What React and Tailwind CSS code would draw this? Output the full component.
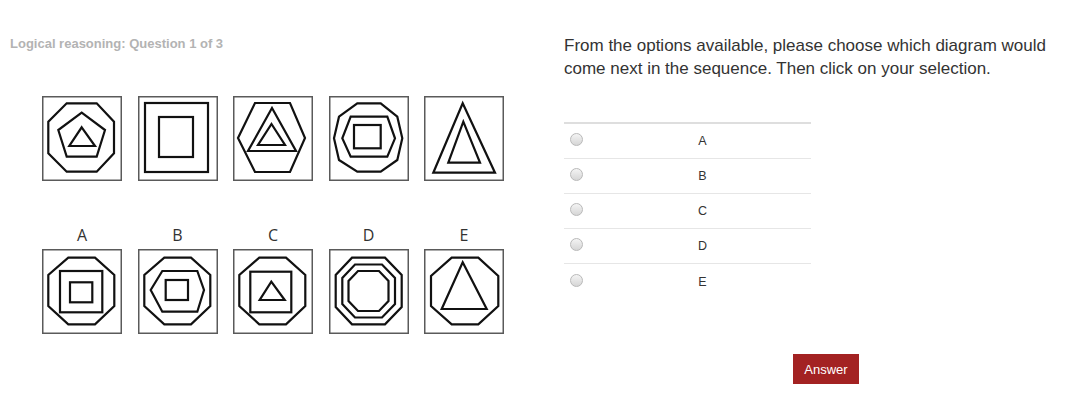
import React from "react";

// Shape frame: every diagram is an 80x85 box with a thin grey border
const Frame = ({ children }) => (
  <svg width="80" height="85" viewBox="0 0 80 85" className="block">
    <rect x="0.75" y="0.75" width="78.5" height="83.5" fill="#fff" stroke="#5a5a5a" strokeWidth="1.5" />
    <g fill="none" stroke="#111" strokeWidth="2.2" strokeLinejoin="miter">
      {children}
    </g>
  </svg>
);

const octA = "26.3,8.7 53,8.7 72.3,26 72.3,57 53,75.3 26.3,75.3 6.3,57 6.3,26";

const sequence = [
  <>
    <polygon points="24.7,7.3 54.7,7.3 72,25.7 72,57.3 54.7,75.7 24.7,75.7 6.3,57.3 6.3,25.7" />
    <polygon points="39.7,16.7 63,34 54.7,60.7 24.7,60.7 16.3,34" />
    <polygon points="39.7,31.3 53,50 27.3,50" />
  </>,
  <>
    <rect x="7" y="7" width="63" height="69" />
    <rect x="21" y="21" width="34" height="40" />
  </>,
  <>
    <polygon points="5,42 22,7 57,7 72,42 57,76 22,76" />
    <polygon points="39,12 63,55 15,55" />
    <polygon points="38.5,28 52,49 25,49" />
  </>,
  <>
    <polygon points="28.3,7.3 51.7,7.3 68.3,20.7 73.3,42.3 68.3,64 51.7,75.7 28.3,75.7 10,64 5,42.3 10,20.7" />
    <polygon points="21.7,20.7 58.3,20.7 66,42.3 58.3,60.7 21.7,60.7 13.3,42.3" />
    <rect x="25" y="29" width="26.7" height="23.3" />
  </>,
  <>
    <polygon points="38.7,7.3 71,76.7 9.3,76.7" />
    <polygon points="39.3,25.7 56,66.7 24.3,66.7" />
  </>,
];

const options = [
  {
    label: "A",
    shape: (
      <>
        <polygon points={octA} />
        <rect x="18" y="22" width="42.3" height="41.3" />
        <rect x="28" y="33.3" width="22.3" height="20" />
      </>
    ),
  },
  {
    label: "B",
    shape: (
      <>
        <polygon points={octA} />
        <polygon points="24.3,22 59.3,22 66,41 59.3,62.7 24.3,62.7 12.7,41" />
        <rect x="27.7" y="31" width="22.3" height="20" />
      </>
    ),
  },
  {
    label: "C",
    shape: (
      <>
        <polygon points={octA} />
        <rect x="17.3" y="22.7" width="41" height="40.6" />
        <polygon points="38.3,32.7 51.7,51 26.7,51" />
      </>
    ),
  },
  {
    label: "D",
    shape: (
      <>
        <polygon points="23,8.7 56,8.7 72.7,26 72.7,58 56,75.3 23,75.3 6.7,58 6.7,26" />
        <polygon points="26,15.5 53,15.5 66,29 66,55 53,68.5 26,68.5 13.3,55 13.3,29" />
        <polygon points="29,22 50,22 59.5,32 59.5,52 50,62 29,62 19.5,52 19.5,32" />
      </>
    ),
  },
  {
    label: "E",
    shape: (
      <>
        <polygon points="27.7,8.7 54.3,8.7 74.3,27 74.3,57 54.3,75.3 27.7,75.3 7,57 7,27" />
        <polygon points="38.7,13.3 62.7,60 17.7,60" />
      </>
    ),
  },
];

const Radio = () => (
  <span className="block w-[13px] h-[13px] rounded-full border border-[#b9b9b9] bg-gradient-to-b from-[#f4f4f4] to-[#d6d6d6]" />
);

export default function App() {
  return (
    <div className="w-[1080px] h-[411px] bg-white flex font-['Liberation_Sans',Arial,sans-serif] text-[#333]">
      {/* Left: the sequence and the answer diagrams */}
      <div className="w-[564px] shrink-0">
        <p className="pl-[10px] pt-[37px] text-[13px] leading-[14px] font-bold text-[#b3b3b3]">
          Logical reasoning: Question 1 of 3
        </p>
        <div className="flex gap-[15.5px] pl-[42px] mt-[45px]">
          {sequence.map((shape, i) => (
            <Frame key={i}>{shape}</Frame>
          ))}
        </div>
        <div className="flex gap-[15.5px] pl-[42px] mt-[45px]">
          {options.map((o) => (
            <div key={o.label} className="flex flex-col items-center">
              <span className="text-[16px] leading-[19px] text-[#333] font-['Open_Sans',sans-serif] mb-[4px]">
                {o.label}
              </span>
              <Frame>{o.shape}</Frame>
            </div>
          ))}
        </div>
      </div>

      {/* Right: question text, options table and answer button */}
      <div className="flex-1 pt-[34px]">
        <p className="text-[17px] leading-[23px] text-[#333] w-[495px]">
          From the options available, please choose which diagram would come next in the sequence. Then click on your selection.
        </p>
        <div className="w-[247px] mt-[42px] border-t-2 border-[#dedede]">
          {options.map((o, i) => (
            <div
              key={o.label}
              className={`flex items-center h-[35px] ${i < options.length - 1 ? "border-b border-[#e6e6e6]" : ""}`}
            >
              <div className="w-[30px] pl-[6px] -mt-[3px]">
                <Radio />
              </div>
              <div className="flex-1 text-center text-[12.5px] leading-[14px] text-[#333]">{o.label}</div>
            </div>
          ))}
        </div>
        <button className="ml-[229px] mt-[55px] w-[66px] h-[30px] bg-[#a32222] text-white text-[13px] leading-[15px]">
          Answer
        </button>
      </div>
    </div>
  );
}
